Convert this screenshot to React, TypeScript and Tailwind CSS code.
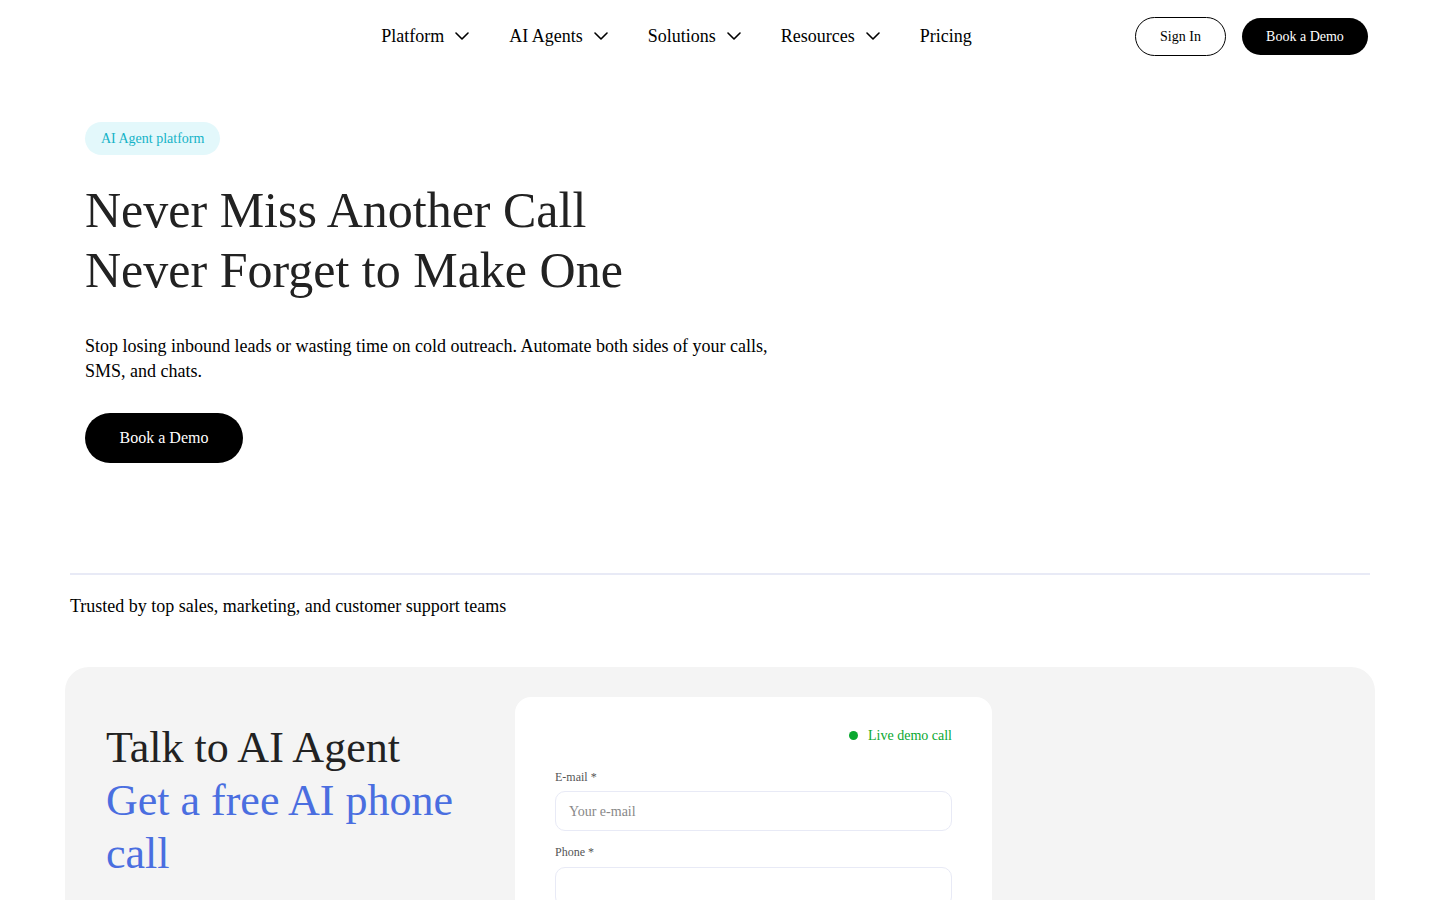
import React from "react";

const serif = { fontFamily: '"Liberation Serif", "Times New Roman", serif' };

function Chevron() {
  return (
    <svg width="14" height="8" viewBox="0 0 14 8" fill="none" className="ml-[11px]">
      <polyline points="1,1 7,7 13,1" stroke="#000" strokeWidth="1.6" strokeLinecap="round" strokeLinejoin="round" />
    </svg>
  );
}

export default function App() {
  const links = ["Platform", "AI Agents", "Solutions", "Resources"];
  return (
    <div className="min-h-[900px] bg-white text-black" style={serif}>
      <header className="flex h-[72px] items-center justify-between px-[72px]">
        <div className="w-[146px] h-[30px]" />
        <nav className="flex items-center gap-[40px] text-[18px]">
          {links.map((l) => (
            <div key={l} className="flex items-center">
              <span>{l}</span>
              <Chevron />
            </div>
          ))}
          <span>Pricing</span>
        </nav>
        <div className="flex items-center gap-[16px] text-[14px]">
          <button className="h-[39px] w-[91px] rounded-full border border-black bg-white">Sign In</button>
          <button className="h-[37px] w-[126px] rounded-full bg-black text-white">Book a Demo</button>
        </div>
      </header>

      <section className="px-[85px] pt-[50px]">
        <div className="inline-flex h-[33px] items-center rounded-full bg-[#e3f8fb] px-[16px] text-[14px] text-[#14b3c7]">
          AI Agent platform
        </div>
        <h1 className="mt-[25px] text-[50px] leading-[60px] text-[#222]">
          Never Miss Another Call
          <br />
          Never Forget to Make One
        </h1>
        <p className="mt-[34px] w-[700px] text-[18px] leading-[25px]">
          Stop losing inbound leads or wasting time on cold outreach. Automate both sides of your calls, SMS, and chats.
        </p>
        <button className="mt-[29px] h-[50px] w-[158px] rounded-full bg-black text-[16px] text-white">Book a Demo</button>
      </section>

      <section className="px-[70px] pt-[110px]">
        <div className="h-[2px] bg-[#e8eaf6]" />
        <p className="mt-[19px] text-[18px] leading-[24px]">Trusted by top sales, marketing, and customer support teams</p>
      </section>

      <section className="px-[65px] pt-[49px]">
        <div className="flex rounded-[24px] bg-[#f4f4f4] pl-[41px] pt-[30px] h-[260px]">
          <div className="w-[370px] pt-[24px]">
            <h2 className="text-[44px] leading-[53px] text-[#222]">Talk to AI Agent</h2>
            <p className="text-[44px] leading-[53px] text-[#4a6ee0]">Get a free AI phone call</p>
          </div>
          <div className="ml-[39px] w-[477px] rounded-t-[16px] bg-white px-[40px] pt-[28px]">
            <div className="flex items-center justify-end gap-[10px] text-[14px] text-[#0aa830]">
              <span className="h-[9px] w-[9px] rounded-full bg-[#0aa830]" />
              <span>Live demo call</span>
            </div>
            <label className="mt-[22px] block text-[12px] text-[#555]">E-mail *</label>
            <div className="mt-[5px] flex h-[40px] items-center rounded-[10px] border border-[#e8eaf6] px-[13px] text-[14px] text-[#888]">
              Your e-mail
            </div>
            <label className="mt-[12px] block text-[12px] text-[#555]">Phone *</label>
            <div className="mt-[6px] h-[40px] rounded-[10px] border border-[#e8eaf6]" />
          </div>
        </div>
      </section>
    </div>
  );
}
